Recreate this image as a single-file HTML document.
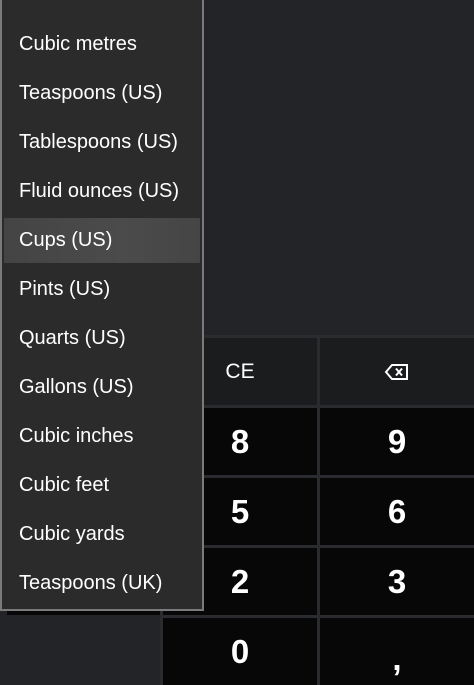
<!DOCTYPE html>
<html><head><style>
body{margin:0;width:474px;height:685px;overflow:hidden;background:#232427;font-family:"Liberation Sans",sans-serif;position:relative}
.k{position:absolute;background:#070708;color:#fff;font-size:33px;font-weight:bold;display:flex;align-items:center;justify-content:center}
.t{background:#1b1c1e;font-size:21px;font-weight:normal}
.menu{position:absolute;left:0;top:-28px;width:200px;height:637px;background:#2b2b2b;border:2px solid #7a7a7a;border-top:none}
.it{position:absolute;left:17px;color:#fff;font-size:20px;height:45px;line-height:45px}
.hl{position:absolute;left:2px;top:246px;width:196px;height:45px;background:linear-gradient(90deg,#444 0%,#4b4b4b 60%,#454545 100%)}
</style></head><body>
<div style="position:absolute;left:160px;top:335px;width:314px;height:350px;background:#2a2b2e"></div>
<div class="k t" style="left:163px;top:338px;width:154px;height:67px">CE</div>
<div class="k t" style="left:320px;top:338px;width:154px;height:67px"><svg width="26" height="18" viewBox="0 0 26 18"><path d="M8 2H23V16H8L2 9Z" fill="none" stroke="#fff" stroke-width="2"/><path d="M12 5.5L18 12.5M18 5.5L12 12.5" stroke="#fff" stroke-width="2"/></svg></div>
<div class="k" style="left:7px;top:408px;width:310px;height:67px"></div>
<div class="k" style="left:163px;top:408px;width:154px;height:67px">8</div>
<div class="k" style="left:320px;top:408px;width:154px;height:67px">9</div>
<div class="k" style="left:7px;top:478px;width:153px;height:67px"></div>
<div class="k" style="left:163px;top:478px;width:154px;height:67px">5</div>
<div class="k" style="left:320px;top:478px;width:154px;height:67px">6</div>
<div class="k" style="left:7px;top:548px;width:153px;height:67px"></div>
<div class="k" style="left:163px;top:548px;width:154px;height:67px">2</div>
<div class="k" style="left:320px;top:548px;width:154px;height:67px">3</div>
<div class="k" style="left:163px;top:618px;width:154px;height:67px">0</div>
<div class="k" style="left:320px;top:618px;width:154px;height:67px;padding-top:14px;box-sizing:border-box">,</div>
<div class="menu">
<div class="hl"></div>
<div class="it" style="top:0px">Litres</div>
<div class="it" style="top:50px">Cubic metres</div>
<div class="it" style="top:99px">Teaspoons (US)</div>
<div class="it" style="top:148px">Tablespoons (US)</div>
<div class="it" style="top:197px">Fluid ounces (US)</div>
<div class="it" style="top:246px">Cups (US)</div>
<div class="it" style="top:295px">Pints (US)</div>
<div class="it" style="top:344px">Quarts (US)</div>
<div class="it" style="top:393px">Gallons (US)</div>
<div class="it" style="top:442px">Cubic inches</div>
<div class="it" style="top:491px">Cubic feet</div>
<div class="it" style="top:540px">Cubic yards</div>
<div class="it" style="top:589px">Teaspoons (UK)</div>
</div>
</body></html>
